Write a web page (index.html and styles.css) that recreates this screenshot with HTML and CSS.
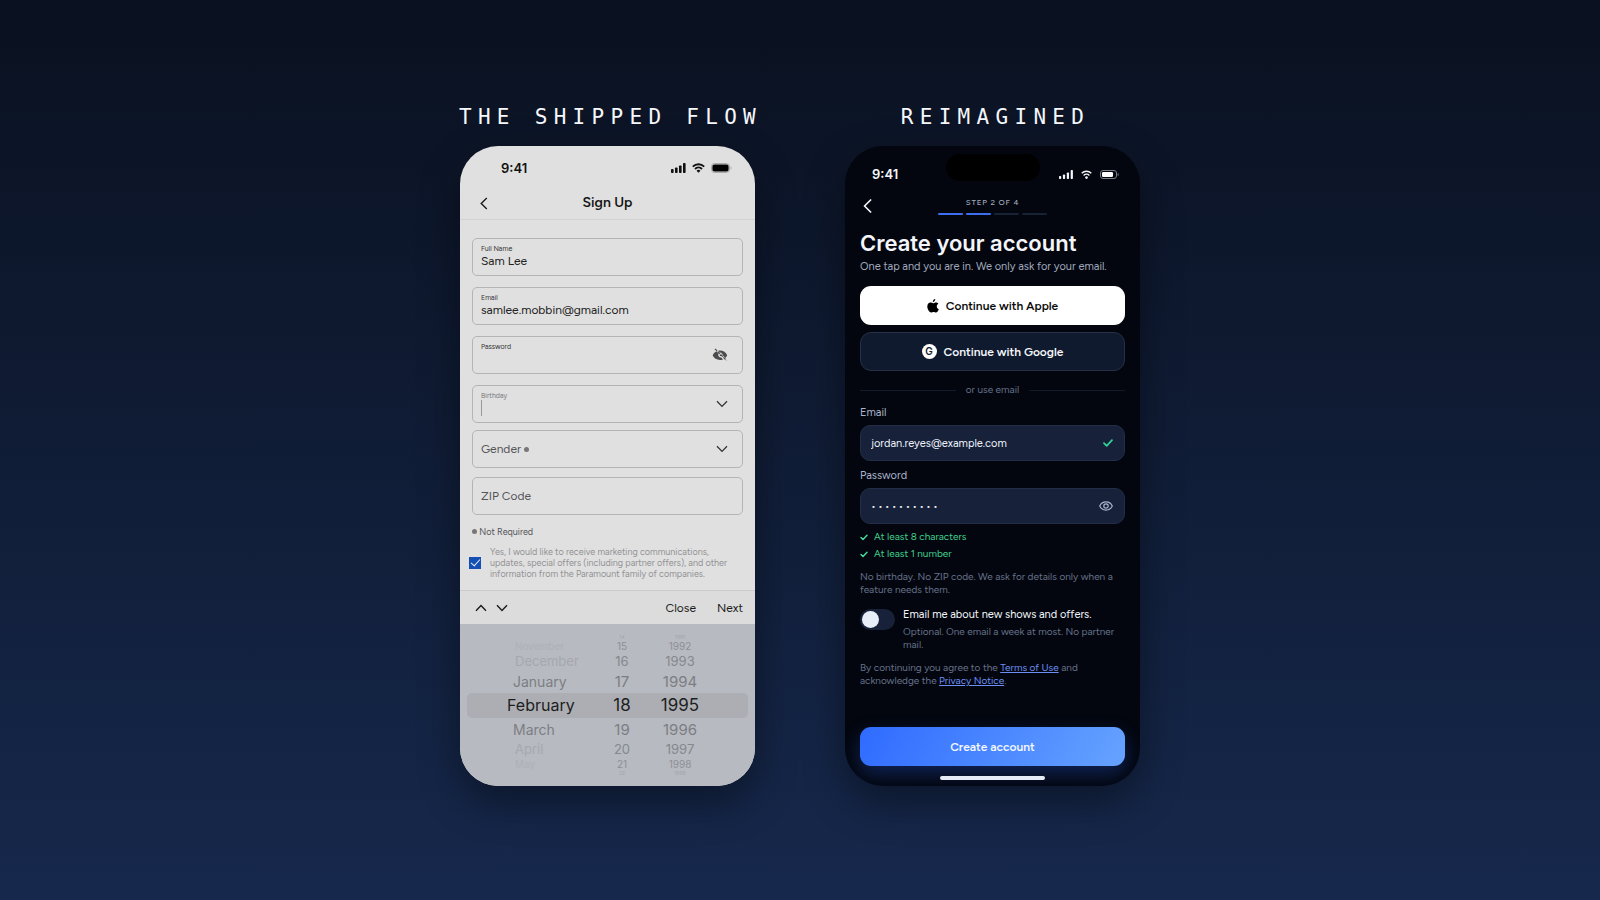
FILE: index.html
```html
<!DOCTYPE html>
<html lang="en">
<head>
<meta charset="utf-8">
<meta name="viewport" content="width=device-width, initial-scale=1">
<title>Sign up comparison</title>
<link rel="stylesheet" href="styles.css">
</head>
<body>
<main class="stage">
  <section class="column">
    <h2 class="caption">THE SHIPPED FLOW</h2>
    <div class="phone phone-light">
      <div class="status">
        <span class="clock">9:41</span>
        <span class="status-icons">
          <svg width="15" height="10" viewBox="0 0 15 10"><g fill="#111"><rect x="0" y="6" width="2.6" height="4" rx=".8"/><rect x="4" y="4.4" width="2.6" height="5.6" rx=".8"/><rect x="8" y="2.4" width="2.6" height="7.6" rx=".8"/><rect x="12" y="0" width="2.6" height="10" rx=".8"/></g></svg>
          <svg width="13" height="10" viewBox="0 0 13 10" fill="none" stroke="#111" stroke-width="1.9"><path d="M.8 3.6a8.2 8.2 0 0 1 11.4 0M3 6a5 5 0 0 1 7 0"/><path d="M6.5 9.8 4.5 7.8a2.8 2.8 0 0 1 4 0z" fill="#111" stroke="none"/></svg>
          <svg width="21" height="10" viewBox="0 0 21 10"><rect x=".5" y=".5" width="18" height="9" rx="3" fill="none" stroke="#a8a8a8"/><rect x="1.4" y="1.4" width="16.2" height="7.2" rx="2" fill="#000"/><path d="M19.6 3.4v3.2q1-.4 1-1.6t-1-1.6z" fill="#a8a8a8"/></svg>
        </span>
      </div>
      <header class="nav">
        <button class="icon-btn" aria-label="Back"><svg width="8" height="13" viewBox="0 0 8 13" fill="none" stroke="#1b1b1b" stroke-width="1.4"><path d="M6.8 1 1.2 6.5 6.8 12"/></svg></button>
        <h3 class="nav-title">Sign Up</h3>
      </header>
      <form class="form-light">
        <div class="box"><label for="name">Full Name</label><input id="name" type="text" value="Sam Lee"></div>
        <div class="box"><label for="mail">Email</label><input id="mail" type="text" value="samlee.mobbin@gmail.com"></div>
        <div class="box with-icon">
          <div class="box-text"><label for="pw">Password</label><input id="pw" type="password"></div>
          <svg class="eye-off" width="16" height="14" viewBox="0 0 16 14"><path d="M.6 7.3C1.600 5.300 3 4 4.500 3.300L6.600 5.400A2.800 2.800 0 0 0 9.300 9.600L11 11.500C6.500 13 2.300 11 .6 7.300zM6.300 2.700C10.500 2 13.800 4.200 15.200 7.300 14.700 8.500 14 9.300 13.300 10L10.800 7.600C10.900 5.800 9.500 4.500 7.900 4.400zM8 6.200 9.800 8.100 7.800 8z" fill="#4c4c4e"/><path d="M3 .8 14.400 12.300" stroke="#4c4c4e" stroke-width="1.200" stroke-dasharray="3 1"/></svg>
        </div>
        <div class="box with-icon muted">
          <div class="box-text"><label for="bday">Birthday</label><input id="bday" class="caret" type="text"></div>
          <svg width="12" height="8" viewBox="0 0 12 8" fill="none" stroke="#333" stroke-width="1.3"><path d="M1 1.300 6 6.400 11 1.300"/></svg>
        </div>
        <button type="button" class="box picker tight"><span>Gender <i class="dot"></i></span><svg width="12" height="8" viewBox="0 0 12 8" fill="none" stroke="#333" stroke-width="1.3"><path d="M1 1.300 6 6.400 11 1.300"/></svg></button>
        <input class="box zip tight" type="text" placeholder="ZIP Code" aria-label="ZIP Code">
        <p class="not-required"><i class="dot"></i> Not Required</p>
        <div class="consent"><input id="consent" type="checkbox" checked><label for="consent">Yes, I would like to receive marketing communications,<br>updates, special offers (including partner offers), and other<br>information from the Paramount family of companies.</label></div>
      </form>
      <div class="toolbar">
        <button class="icon-btn" aria-label="Previous field"><svg width="12" height="8" viewBox="0 0 12 8" fill="none" stroke="#1b1b1b" stroke-width="1.4"><path d="M1 6.700 6 1.600 11 6.700"/></svg></button>
        <button class="icon-btn" aria-label="Next field"><svg width="12" height="8" viewBox="0 0 12 8" fill="none" stroke="#1b1b1b" stroke-width="1.4"><path d="M1 1.300 6 6.400 11 1.300"/></svg></button>
        <button class="text-btn push">Close</button>
        <button class="text-btn">Next</button>
      </div>
      <div class="wheel">
        <div class="row r4"><span></span><span>14</span><span>1991</span></div>
        <div class="row r3"><span>November</span><span>15</span><span>1992</span></div>
        <div class="row r2"><span>December</span><span>16</span><span>1993</span></div>
        <div class="row r1"><span>January</span><span>17</span><span>1994</span></div>
        <div class="row current"><span>February</span><span>18</span><span>1995</span></div>
        <div class="row r1"><span>March</span><span>19</span><span>1996</span></div>
        <div class="row r2"><span>April</span><span>20</span><span>1997</span></div>
        <div class="row r3"><span>May</span><span>21</span><span>1998</span></div>
        <div class="row r4"><span></span><span>22</span><span>1999</span></div>
      </div>
    </div>
  </section>

  <section class="column">
    <h2 class="caption">REIMAGINED</h2>
    <div class="phone phone-dark">
      <div class="island"></div>
      <div class="status">
        <span class="clock">9:41</span>
        <span class="status-icons">
          <svg width="14" height="9" viewBox="0 0 14 9"><g fill="#f4f6fb"><rect x="0" y="6" width="2.2" height="3" rx=".7"/><rect x="3.900" y="4.500" width="2.2" height="4.500" rx=".7"/><rect x="7.800" y="2.500" width="2.2" height="6.500" rx=".7"/><rect x="11.700" y="0" width="2.2" height="9" rx=".7"/></g></svg>
          <svg width="11" height="9" viewBox="0 0 11 9" fill="none" stroke="#f4f6fb" stroke-width="1.4"><path d="M.7 3.200a7 7 0 0 1 9.600 0M2.600 5.400a4.200 4.200 0 0 1 5.800 0"/><circle cx="5.500" cy="7.600" r="1.300" fill="#f4f6fb" stroke="none"/></svg>
          <svg width="19" height="9" viewBox="0 0 19 9"><rect x=".5" y=".5" width="16" height="8" rx="2.500" fill="none" stroke="#7b7e86"/><rect x="2" y="2" width="11" height="5" rx="1.200" fill="#fff"/><rect x="17.600" y="3.200" width="1" height="2.600" rx=".5" fill="#7b7e86"/></svg>
        </span>
      </div>
      <header class="steps">
        <button class="icon-btn" aria-label="Back"><svg width="9" height="14" viewBox="0 0 9 14" fill="none" stroke="#f4f6fb" stroke-width="1.7" stroke-linecap="round" stroke-linejoin="round"><path d="M7.600 1 1.500 7l6.100 6"/></svg></button>
        <div class="steps-mid"><span>STEP 2 OF 4</span><div class="bars"><i class="on"></i><i class="on"></i><i></i><i></i></div></div>
      </header>
      <h3 class="title">Create your account</h3>
      <p class="lead">One tap and you are in. We only ask for your email.</p>
      <button class="sso apple"><svg width="12" height="14" viewBox="0 0 12 14" fill="#000"><path d="M8.300.1c.1 1.400-1.100 2.900-2.500 2.900C5.600 1.700 6.900.3 8.300.1zM11.400 4.800C10.300 5.500 9.700 6.300 9.800 7.500c0 1.400.8 2.200 2 2.700-.5 1.400-1.600 3.400-2.900 3.400-.8 0-1.200-.5-2.300-.5s-1.500.5-2.300.5C2.300 13.600.3 10.300.3 7.600.3 5 1.900 3.600 3.500 3.600c1.100 0 1.900.7 2.600.7.700 0 1.600-.8 2.900-.8.900 0 1.800.5 2.400 1.300z"/></svg>Continue with Apple</button>
      <button class="sso google"><span class="g">G</span>Continue with Google</button>
      <div class="divider">or use email</div>
      <form class="form-dark">
        <label for="mail2">Email</label>
        <div class="field"><input id="mail2" type="text" value="jordan.reyes@example.com"><svg width="10" height="8" viewBox="0 0 10 8" fill="none" stroke="#34d399" stroke-width="1.7" stroke-linecap="round" stroke-linejoin="round"><path d="M1 4.200 3.700 6.800 9 1.200"/></svg></div>
        <label for="pw2">Password</label>
        <div class="field"><input id="pw2" class="dots" type="text" value="••••••••••"><button type="button" class="icon-btn" aria-label="Show password"><svg width="14" height="10" viewBox="0 0 14 10" fill="none" stroke="#a9b4cc" stroke-width="1.2"><path d="M.7 5C2 2.300 4.300.9 7 .9S12 2.300 13.300 5C12 7.700 9.700 9.100 7 9.100S2 7.700.7 5z"/><circle cx="7" cy="5" r="2.200"/></svg></button></div>
        <ul class="rules">
          <li><svg width="8" height="7" viewBox="0 0 8 7" fill="none" stroke="#4ade9f" stroke-width="1.4" stroke-linecap="round" stroke-linejoin="round"><path d="M1 3.600 3 5.600 7 1.300"/></svg>At least 8 characters</li>
          <li><svg width="8" height="7" viewBox="0 0 8 7" fill="none" stroke="#4ade9f" stroke-width="1.4" stroke-linecap="round" stroke-linejoin="round"><path d="M1 3.600 3 5.600 7 1.300"/></svg>At least 1 number</li>
        </ul>
        <p class="note">No birthday. No ZIP code. We ask for details only when a<br>feature needs them.</p>
        <div class="offer"><input id="offers" class="switch" type="checkbox" role="switch"><div><label for="offers">Email me about new shows and offers.</label><p>Optional. One email a week at most. No partner<br>mail.</p></div></div>
        <p class="note legal">By continuing you agree to the <a href="#terms">Terms of Use</a> and<br>acknowledge the <a href="#privacy">Privacy Notice</a>.</p>
      </form>
      <button class="create">Create account</button>
      <div class="home"></div>
    </div>
  </section>
</main>
</body>
</html>
```
FILE: styles.css
```css
* { box-sizing: border-box; }
body {
  margin: 0;
  min-height: 100vh;
  background: linear-gradient(180deg, #0a1120 0%, #16284c 100%);
  font-family: Figtree, Lato, "Open Sans", sans-serif;
}
h2, h3, p, ul { margin: 0; padding: 0; font-weight: 400; }
button, input { font: inherit; color: inherit; margin: 0; padding: 0; border: 0; background: none; }
svg { display: block; flex: none; }
label { display: block; }

.stage { min-height: 100vh; display: flex; justify-content: center; align-items: center; gap: 90px; padding-bottom: 2px; }
.column { display: flex; flex-direction: column; align-items: center; gap: 17px; width: 295px; padding-bottom: 7px; }
.caption {
  margin-right: -6px;
  color: #f6f8fc;
  font: 21px/24px "DejaVu Sans Mono", monospace;
  letter-spacing: 0.3em;
  white-space: nowrap;
}
.phone {
  position: relative;
  display: flex;
  flex-direction: column;
  width: 100%;
  min-height: 640px;
  border-radius: 38px;
  overflow: hidden;
  box-shadow: 0 16px 40px rgba(0, 0, 0, 0.4);
}
.status { display: flex; justify-content: space-between; align-items: center; font: 600 13px/16px Inter, sans-serif; }
.status-icons { display: flex; align-items: center; }
.icon-btn { display: flex; }

/* light phone */
.phone-light { background: #e0e0e0; color: #222; }
.phone-light .status { padding: 14px 23px 0 41px; color: #111; }
.phone-light .status-icons { gap: 6px; }
.nav { display: grid; grid-template-columns: 20px 1fr 20px; align-items: center; height: 44px; padding: 11px 20px 0; border-bottom: 1px solid #d3d3d3; }
.nav-title { color: #151515; font: 600 14px/20px Figtree, Lato, sans-serif; text-align: center; }
.form-light { padding: 18px 12px 0; }
.box {
  display: block;
  width: 100%;
  height: 38px;
  margin-bottom: 11px;
  padding: 6px 8px 0;
  border: 1px solid #b4b4b6;
  border-radius: 5px;
  font-size: 12px;
  line-height: 16px;
}
.box label { color: #333; font-size: 7px; line-height: 8px; }
.box input { display: block; width: 100%; height: 16px; color: #222; }
.box.with-icon, .box.picker { display: flex; justify-content: space-between; align-items: center; padding: 0 14px 0 8px; }
.box-text { flex: 1; align-self: flex-start; padding-top: 6px; }
.box.muted { margin-bottom: 7px; }
.muted label { color: #77777a; }
.box input.caret { width: 1px; background: #999; }
.box.tight { margin-bottom: 9px; color: #555558; text-align: left; }
.box.zip { padding: 0 8px; }
.zip::placeholder { color: #555558; opacity: 1; }
.dot { display: inline-block; width: 5px; height: 5px; border-radius: 50%; background: #77777a; vertical-align: 1px; }
.not-required { padding-top: 2px; color: #555558; font-size: 9px; line-height: 12px; }
.consent { display: flex; align-items: center; gap: 9px; margin: 8px 0 11px -3px; color: #929294; font-size: 9px; line-height: 11px; }
.consent label { white-space: nowrap; }
.consent input {
  flex: none;
  appearance: none;
  width: 12px;
  height: 12px;
  display: grid;
  place-items: center;
  background: #1450b4;
}
.consent input::after { content: ""; width: 4px; height: 8px; margin-bottom: 2px; border: solid #e8eefc; border-width: 0 1px 1px 0; transform: rotate(42deg); }
.toolbar { display: flex; align-items: center; gap: 9px; height: 34px; padding: 0 12px 0 15px; border-top: 1px solid #cbcbcb; background: #dcdcdc; color: #1b1b1b; font-size: 12px; }
.push { margin-left: auto; margin-right: 12px; }
.wheel { flex: 1; padding: 11px 7px 0; background: #b7bac0; font-family: Inter, sans-serif; }
.row { display: grid; grid-template-columns: 137px 36px 80px; color: #7c7e84; text-align: center; }
.row span:first-child { padding-left: 48px; text-align: left; }
.current { border-radius: 5px; background: #adaeb4; color: #1d1e20; font-size: 17px; line-height: 25px; }
.current span:first-child { padding-left: 40px; font-size: 16px; }
.r1 { font-size: 15px; line-height: 23px; }
.r1 span:first-child { padding-left: 46px; font-size: 14px; }
.r2 { color: #85888e; font-size: 13px; line-height: 17px; }
.r3 { color: #8d9096; font-size: 10px; line-height: 13px; }
.r4 { height: 5px; color: #a3a6ac; font-size: 5px; line-height: 5px; }
.r2 span:first-child { color: #a5a8ae; }
.r3 span:first-child { color: #aeb1b7; }

/* dark phone */
.phone-dark { padding: 0 15px; background: #03060e; color: #f4f6fb; }
.island { position: absolute; top: 8px; left: 50%; width: 94px; height: 27px; margin-left: -47px; border-radius: 14px; background: #000; }
.phone-dark .status { padding: 20px 6px 0 12px; }
.phone-dark .status-icons { gap: 8px; }
.steps { display: grid; grid-template-columns: 24px 1fr 24px; align-items: center; margin-top: 14px; padding: 0 3px; }
.steps-mid { display: flex; flex-direction: column; align-items: center; gap: 5px; color: #a0a9bd; font-size: 8px; font-weight: 500; line-height: 12px; letter-spacing: 0.1em; }
.bars { display: flex; gap: 3px; }
.bars i { width: 25px; height: 2px; border-radius: 1px; background: #182235; }
.bars .on { background: #3b6ff0; }
.title { margin-top: 14px; font: 600 22px/28px Inter, sans-serif; }
.lead { margin-top: 2px; color: #a0a9bd; font-size: 11px; line-height: 16px; white-space: nowrap; }
.sso { display: flex; justify-content: center; align-items: center; gap: 7px; width: 100%; height: 39px; border-radius: 11px; font-weight: 600; font-size: 12px; }
.apple { margin-top: 11px; background: #fff; color: #0a0a0a; }
.google { margin-top: 7px; border: 1px solid #263147; background: #101a2e; }
.g { width: 15px; height: 15px; border-radius: 50%; background: #fff; color: #111a2d; font: 600 10px/15px Inter, sans-serif; text-align: center; }
.divider { display: flex; align-items: center; gap: 10px; margin-top: 12px; color: #66718a; font-size: 10px; line-height: 14px; }
.divider::before, .divider::after { content: ""; flex: 1; height: 1px; background: #121927; }
.form-dark > label { margin: 8px 0 5px; color: #a9b4cc; font-size: 11px; line-height: 14px; }
.form-dark > label:first-child { margin-top: 9px; }
.field { display: flex; align-items: center; height: 36px; padding: 0 11px 0 10px; border: 1px solid #222e47; border-radius: 10px; background: #17223a; }
.field input { flex: 1; min-width: 0; color: #eef2fb; font-size: 11px; }
.field .dots { font-size: 10px; letter-spacing: 2px; }
.rules { display: grid; gap: 3px; margin-top: 6px; list-style: none; color: #3fcf8e; font-size: 10px; line-height: 14px; }
.rules li { display: flex; align-items: center; gap: 6px; }
.note { margin-top: 9px; color: #66718a; font-size: 10px; line-height: 13px; white-space: nowrap; }
.note.legal { margin-top: 10px; }
.offer { display: flex; gap: 8px; margin-top: 11px; font-size: 11px; line-height: 16px; white-space: nowrap; }
.offer p { margin-top: 2px; color: #66718a; font-size: 10px; line-height: 13px; }
.switch { appearance: none; flex: none; display: flex; width: 35px; height: 21px; margin-top: 2px; padding: 2px; border-radius: 11px; background: #17223a; }
.switch::before { content: ""; width: 17px; height: 17px; border-radius: 50%; background: #e8edfa; }
.note a { color: #6b8ff5; }
.create { width: 100%; height: 39px; margin-top: auto; border-radius: 11px; background: linear-gradient(120deg, #2f6bff, #66a3ff); box-shadow: 0 8px 20px rgba(47, 107, 255, 0.3); color: #f4f8ff; font-weight: 600; font-size: 12px; }
.home { width: 105px; height: 4px; margin: 10px auto 6px; border-radius: 2px; background: #e6ecf6; }
```
